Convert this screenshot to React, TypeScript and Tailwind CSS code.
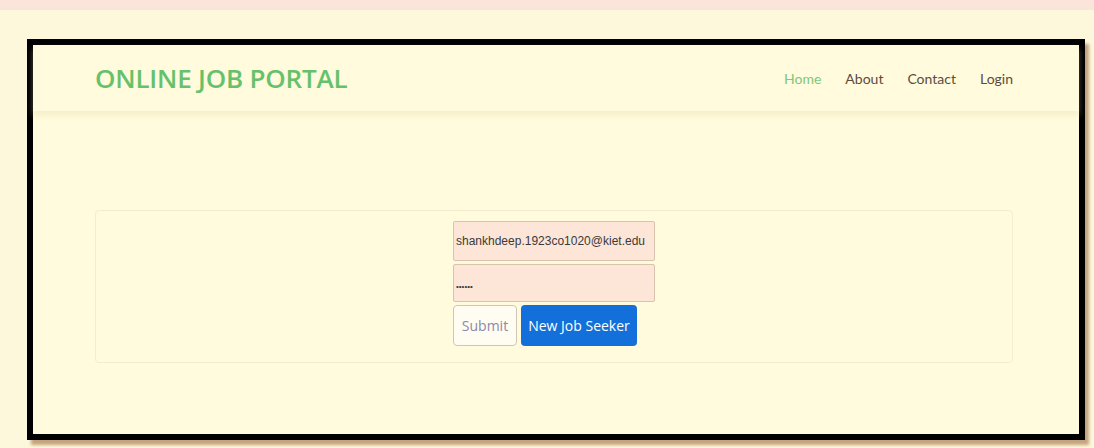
import React from 'react';

const NAV_LINKS = [
  { label: 'Home', active: true },
  { label: 'About', active: false },
  { label: 'Contact', active: false },
  { label: 'Login', active: false },
];

export default function App() {
  return (
    <div className="w-[1094px] h-[448px] overflow-hidden bg-[#fdf8dc]" style={{ fontFamily: 'Lato, "Open Sans", sans-serif' }}>
      <div className="h-[10px] bg-[#fbe4da]" />

      <div className="pt-[29px] pl-[27px]">
        <div className="w-[1058px] h-[401px] border-[6px] border-black bg-[#fffbdc] shadow-[4px_5px_3px_#c4a47e]">
          {/* Navbar */}
          <nav className="h-[66px] flex items-center justify-between pl-[62px] pr-[66px] shadow-[0_4px_6px_rgba(230,215,170,0.35)]">
            <div className="text-[26px] font-semibold tracking-[-0.2px] text-[#67c16c]" style={{ fontFamily: '"Open Sans", sans-serif' }}>
              ONLINE JOB PORTAL
            </div>
            <div className="flex items-center gap-[24px] text-[14px] pt-[1px]">
              {NAV_LINKS.map((link) => (
                <a
                  key={link.label}
                  className={link.active ? 'text-[#7fc77a]' : 'text-[#5c4b3d]'}
                >
                  {link.label}
                </a>
              ))}
            </div>
          </nav>

          {/* Login card */}
          <div className="mt-[99px] ml-[62px] w-[918px] h-[153px] rounded-[4px] border border-[#f4ecd0] pt-[10px] flex justify-center">
            <form className="w-[202px] flex flex-col gap-[3px]" onSubmit={(e) => e.preventDefault()}>
              <input
                type="email"
                defaultValue="shankhdeep.1923co1020@kiet.edu"
                className="h-[40px] px-[2px] bg-[#fde6d8] border border-[#d9c3ad] rounded-[2px] text-[12px] text-[#3a3a3a] outline-none"
                style={{ fontFamily: '"Liberation Sans", Arial, sans-serif' }}
              />
              <input
                type="password"
                defaultValue="123456"
                className="h-[38px] px-[2px] pt-[6px] bg-[#fde6d8] border border-[#d9c3ad] rounded-[2px] text-[8px] text-[#3a3a3a] outline-none"
                style={{ fontFamily: '"Liberation Sans", Arial, sans-serif' }}
              />
              <div className="flex gap-[4px]">
                <button
                  type="submit"
                  className="h-[41px] w-[64px] bg-[#fffdf2] border border-[#cfc6b8] rounded-[4px] text-[14px] text-[#8b88ab]"
                  style={{ fontFamily: '"Open Sans", sans-serif' }}
                >
                  Submit
                </button>
                <button
                  type="button"
                  className="h-[41px] w-[116px] bg-[#136fd9] rounded-[4px] text-[14px] text-white"
                  style={{ fontFamily: '"Open Sans", sans-serif' }}
                >
                  New Job Seeker
                </button>
              </div>
            </form>
          </div>
        </div>
      </div>
    </div>
  );
}
